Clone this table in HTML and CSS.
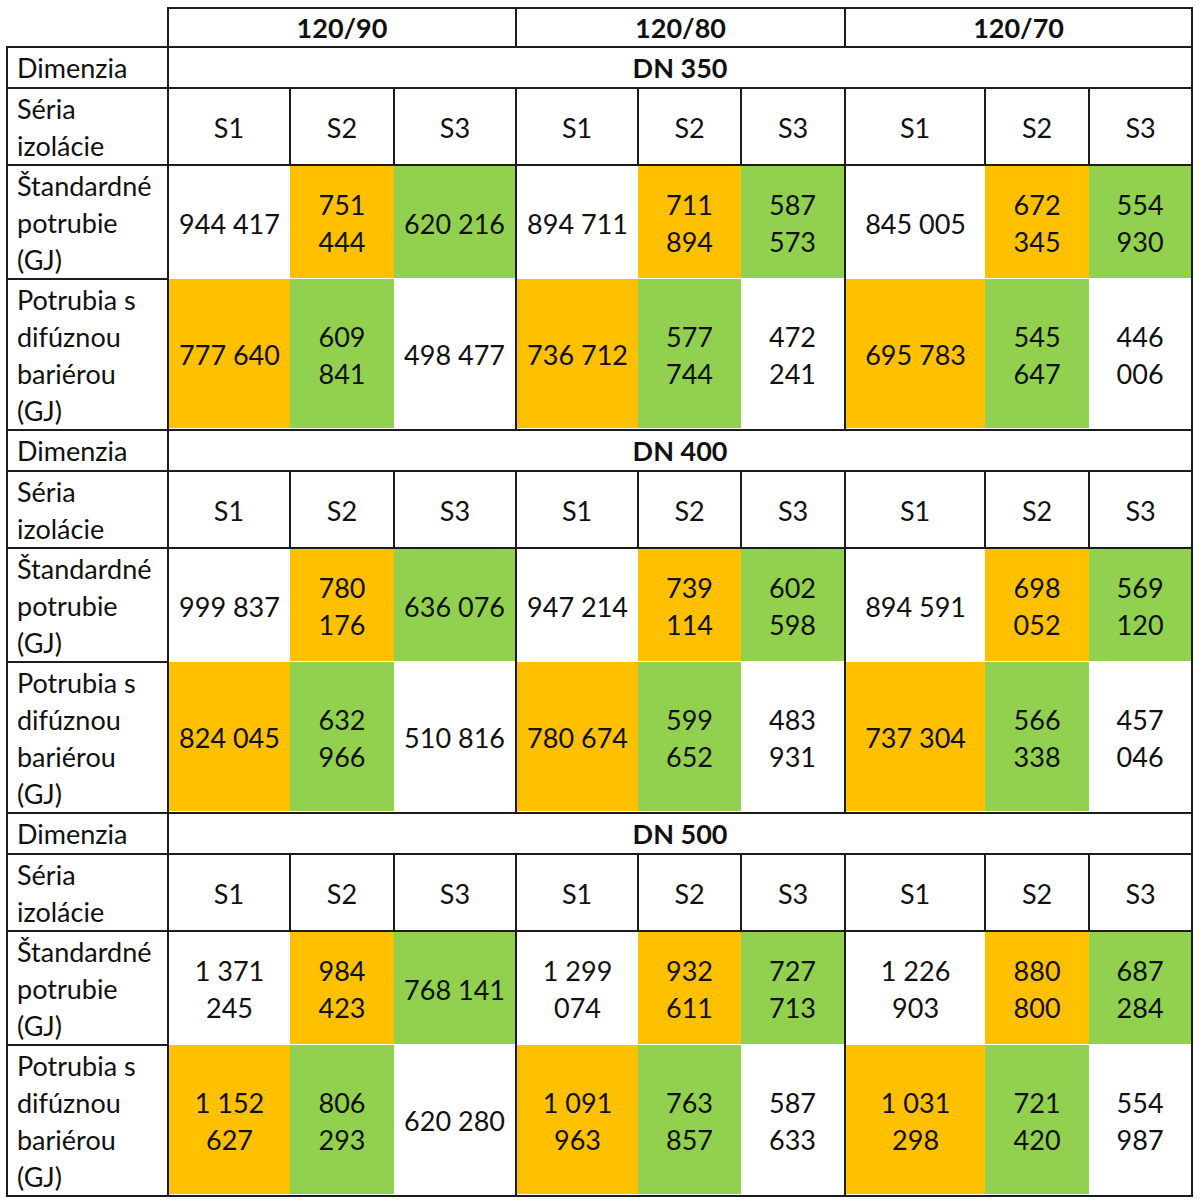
FILE: index.html
```html
<!DOCTYPE html>
<html lang="sk">
<head>
<meta charset="utf-8">
<title>Tabuľka</title>
<link rel="stylesheet" href="styles.css">
</head>
<body>
<div class="wrap">
<table class="grid">
  <colgroup>
    <col class="c0"><col class="cw"><col class="cn"><col class="cw"><col class="cw"><col class="cn2"><col class="cn"><col class="cx"><col class="cn"><col class="cn2">
  </colgroup>
  <tr class="top">
    <th class="blank"></th>
    <th colspan="3">120/90</th>
    <th colspan="3">120/80</th>
    <th colspan="3">120/70</th>
  </tr>

  <tr class="dim"><td class="lab">Dimenzia</td><td colspan="9" class="dn">DN 350</td></tr>
  <tr class="ser"><td class="lab">Séria<br>izolácie</td><td>S1</td><td>S2</td><td>S3</td><td>S1</td><td>S2</td><td>S3</td><td>S1</td><td>S2</td><td>S3</td></tr>
  <tr class="std">
    <td class="lab">Štandardné<br>potrubie<br>(GJ)</td>
    <td>944 417</td><td class="o">751<br>444</td><td class="g ge">620 216</td>
    <td>894 711</td><td class="o">711<br>894</td><td class="g ge">587<br>573</td>
    <td>845 005</td><td class="o">672<br>345</td><td class="g ge">554<br>930</td>
  </tr>
  <tr class="dif">
    <td class="lab">Potrubia s<br>difúznou<br>bariérou<br>(GJ)</td>
    <td class="o">777 640</td><td class="g">609<br>841</td><td class="ge">498 477</td>
    <td class="o">736 712</td><td class="g">577<br>744</td><td class="ge">472<br>241</td>
    <td class="o">695 783</td><td class="g">545<br>647</td><td class="ge">446<br>006</td>
  </tr>

  <tr class="dim"><td class="lab">Dimenzia</td><td colspan="9" class="dn">DN 400</td></tr>
  <tr class="ser"><td class="lab">Séria<br>izolácie</td><td>S1</td><td>S2</td><td>S3</td><td>S1</td><td>S2</td><td>S3</td><td>S1</td><td>S2</td><td>S3</td></tr>
  <tr class="std">
    <td class="lab">Štandardné<br>potrubie<br>(GJ)</td>
    <td>999 837</td><td class="o">780<br>176</td><td class="g ge">636 076</td>
    <td>947 214</td><td class="o">739<br>114</td><td class="g ge">602<br>598</td>
    <td>894 591</td><td class="o">698<br>052</td><td class="g ge">569<br>120</td>
  </tr>
  <tr class="dif">
    <td class="lab">Potrubia s<br>difúznou<br>bariérou<br>(GJ)</td>
    <td class="o">824 045</td><td class="g">632<br>966</td><td class="ge">510 816</td>
    <td class="o">780 674</td><td class="g">599<br>652</td><td class="ge">483<br>931</td>
    <td class="o">737 304</td><td class="g">566<br>338</td><td class="ge">457<br>046</td>
  </tr>

  <tr class="dim"><td class="lab">Dimenzia</td><td colspan="9" class="dn">DN 500</td></tr>
  <tr class="ser"><td class="lab">Séria<br>izolácie</td><td>S1</td><td>S2</td><td>S3</td><td>S1</td><td>S2</td><td>S3</td><td>S1</td><td>S2</td><td>S3</td></tr>
  <tr class="std">
    <td class="lab">Štandardné<br>potrubie<br>(GJ)</td>
    <td>1 371<br>245</td><td class="o">984<br>423</td><td class="g ge">768 141</td>
    <td>1 299<br>074</td><td class="o">932<br>611</td><td class="g ge">727<br>713</td>
    <td>1 226<br>903</td><td class="o">880<br>800</td><td class="g ge">687<br>284</td>
  </tr>
  <tr class="dif">
    <td class="lab">Potrubia s<br>difúznou<br>bariérou<br>(GJ)</td>
    <td class="o">1 152<br>627</td><td class="g">806<br>293</td><td class="ge">620 280</td>
    <td class="o">1 091<br>963</td><td class="g">763<br>857</td><td class="ge">587<br>633</td>
    <td class="o">1 031<br>298</td><td class="g">721<br>420</td><td class="ge">554<br>987</td>
  </tr>
</table>
</div>
</body>
</html>
```

FILE: styles.css
```css
html, body {
  margin: 0;
  padding: 0;
  background: #ffffff;
}

.wrap {
  padding: 7px 0 0 6px;
}

.grid {
  border-collapse: collapse;
  table-layout: fixed;
  width: 1186px;
  font-family: Lato, "Liberation Sans", sans-serif;
  font-size: 27px;
  line-height: 37px;
  color: #111;
}

.c0 { width: 161px; }
.cw { width: 122px; }
.cn { width: 104px; }
.cn2 { width: 103px; }
.cx { width: 140px; }

.grid th,
.grid td {
  padding: 1px 0 0 0;
  text-align: center;
  vertical-align: middle;
  white-space: nowrap;
  font-weight: 400;
}

.grid .dim td {
  padding: 1px 0;
}

.top th {
  padding: 0;
  border: 2px solid #1c1c1c;
}

.grid .top th {
  font-weight: 700;
}

.top th.blank {
  border: none;
  border-bottom: 2px solid #1c1c1c;
}

.grid td.lab {
  text-align: left;
  padding-left: 9px;
  padding-right: 6px;
  border: 2px solid #1c1c1c;
}

.dim td,
.ser td {
  border: 2px solid #1c1c1c;
}

.grid td.dn {
  font-weight: 700;
}

.std td,
.dif td {
  border: none;
}

.dif td {
  border-bottom: 2px solid #1c1c1c;
}

.grid td.ge {
  border-right: 2px solid #1c1c1c;
}

.o {
  background: #ffc000;
  box-shadow: inset 0 -1px 0 #ffffff;
}

.g {
  background: #92d050;
  box-shadow: inset 0 -1px 0 #ffffff;
}
```
